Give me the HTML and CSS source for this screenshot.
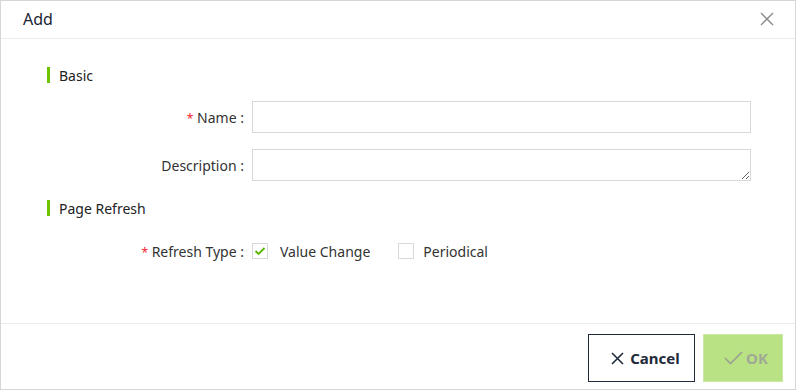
FILE: index.html
```html
<!DOCTYPE html>
<html lang="en">
<head>
  <meta charset="UTF-8" />
  <title>Add</title>
  <link rel="stylesheet" href="styles.css">
</head>
<body>
  <div class="dialog">
    <div class="header">
      <span class="title">Add</span>
      <svg class="close" width="14" height="14" viewBox="0 0 14 14"><path d="M1 1L13 13M13 1L1 13" stroke="#8a8a8a" stroke-width="1.4" fill="none"/></svg>
    </div>

    <div class="content">
      <div class="section-title first"><span class="bar"></span>Basic</div>

      <div class="row">
        <label class="label"><span class="req">*</span> Name :</label>
        <input class="input" type="text">
      </div>
      <div class="row gap">
        <label class="label">Description :</label>
        <textarea class="input textarea"></textarea>
      </div>

      <div class="section-title second"><span class="bar"></span>Page Refresh</div>

      <div class="row refresh">
        <label class="label"><span class="req">*</span> Refresh Type :</label>
        <div class="opts">
          <div class="opt">
            <span class="box"><svg width="12" height="10" viewBox="0 0 12 10"><path d="M1.5 5L4.5 8L10.5 2" stroke="#5cb300" stroke-width="1.8" fill="none"/></svg></span>
            <span class="opt-text first-opt">Value Change</span>
          </div>
          <div class="opt">
            <span class="box"></span>
            <span class="opt-text">Periodical</span>
          </div>
        </div>
      </div>
    </div>

    <div class="footer">
      <button class="btn cancel">
        <svg width="13" height="13" viewBox="0 0 13 13"><path d="M1 1L12 12M12 1L1 12" stroke="#1f2a3a" stroke-width="1.6" fill="none"/></svg>
        Cancel
      </button>
      <button class="btn ok">
        <svg width="19" height="14" viewBox="0 0 19 14"><path d="M1 7L6.5 12.5L18 1" stroke="#9aa08f" stroke-width="1.6" fill="none"/></svg>
        OK
      </button>
    </div>
  </div>
</body>
</html>
```

FILE: styles.css
```css
body {
  margin: 0;
  font-family: 'Noto Sans', sans-serif;
  color: #333;
  background: white;
}
.dialog {
  width: 796px;
  height: 390px;
  box-sizing: border-box;
  border: 1px solid #d6d6d6;
  display: flex;
  flex-direction: column;
}
.header {
  height: 37px;
  border-bottom: 1px solid #ebebeb;
  display: flex;
  align-items: center;
  justify-content: space-between;
  padding: 0 21px 0 22px;
}
.title {
  font-size: 16px;
  color: #1b2535;
  margin-top: -1px;
}
.close {
  margin-top: -1px;
}
.content {
  flex: 1;
  padding-right: 44px;
}
.section-title {
  display: flex;
  align-items: center;
  height: 20px;
  font-size: 14px;
  color: #222;
  padding-left: 46px;
}
.section-title.first {
  margin-top: 26px;
}
.section-title.second {
  margin-top: 17px;
}
.bar {
  width: 3px;
  height: 16px;
  background: #6cc400;
  margin-right: 9px;
}
.row {
  display: grid;
  grid-template-columns: 243px 1fr;
  column-gap: 8px;
  align-items: center;
  margin-top: 16px;
}
.row.gap {
  margin-top: 16px;
}
.row.refresh {
  margin-top: 17px;
}
.label {
  text-align: right;
  font-size: 14px;
  color: #333;
}
.req {
  color: #f5222d;
  font-size: 12px;
}
.input {
  height: 32px;
  box-sizing: border-box;
  border: 1px solid #d9d9d9;
  border-radius: 0;
  padding: 4px 8px;
  font-family: inherit;
  font-size: 14px;
  outline: none;
}
.textarea {
  resize: vertical;
  display: block;
}
.opts {
  display: flex;
  align-items: center;
  gap: 28px;
  height: 32px;
}
.opt {
  display: flex;
  align-items: center;
}
.box {
  width: 16px;
  height: 16px;
  box-sizing: border-box;
  border: 1px solid #d9d9d9;
  display: flex;
  align-items: center;
  justify-content: center;
  margin-right: 9px;
}
.opt-text {
  font-size: 14px;
  color: #333;
}
.first-opt {
  margin-left: 3px;
}
.footer {
  height: 66px;
  border-top: 1px solid #ebebeb;
  display: flex;
  justify-content: flex-end;
  align-items: flex-start;
  gap: 8px;
  padding: 10px 12px 0 0;
  box-sizing: border-box;
}
.btn {
  height: 48px;
  box-sizing: border-box;
  display: flex;
  align-items: center;
  justify-content: center;
  gap: 6px;
  font-family: inherit;
  font-size: 15px;
  font-weight: bold;
  cursor: pointer;
}
.cancel {
  width: 107px;
  background: white;
  border: 1px solid #1f2a3a;
  color: #1f2a3a;
  padding: 0 0 0 8px;
}
.ok {
  width: 80px;
  background: #b8e283;
  border: 1px solid #c9e8a3;
  color: #a0a896;
  padding: 0 0 0 6px;
  gap: 3px;
}
```
